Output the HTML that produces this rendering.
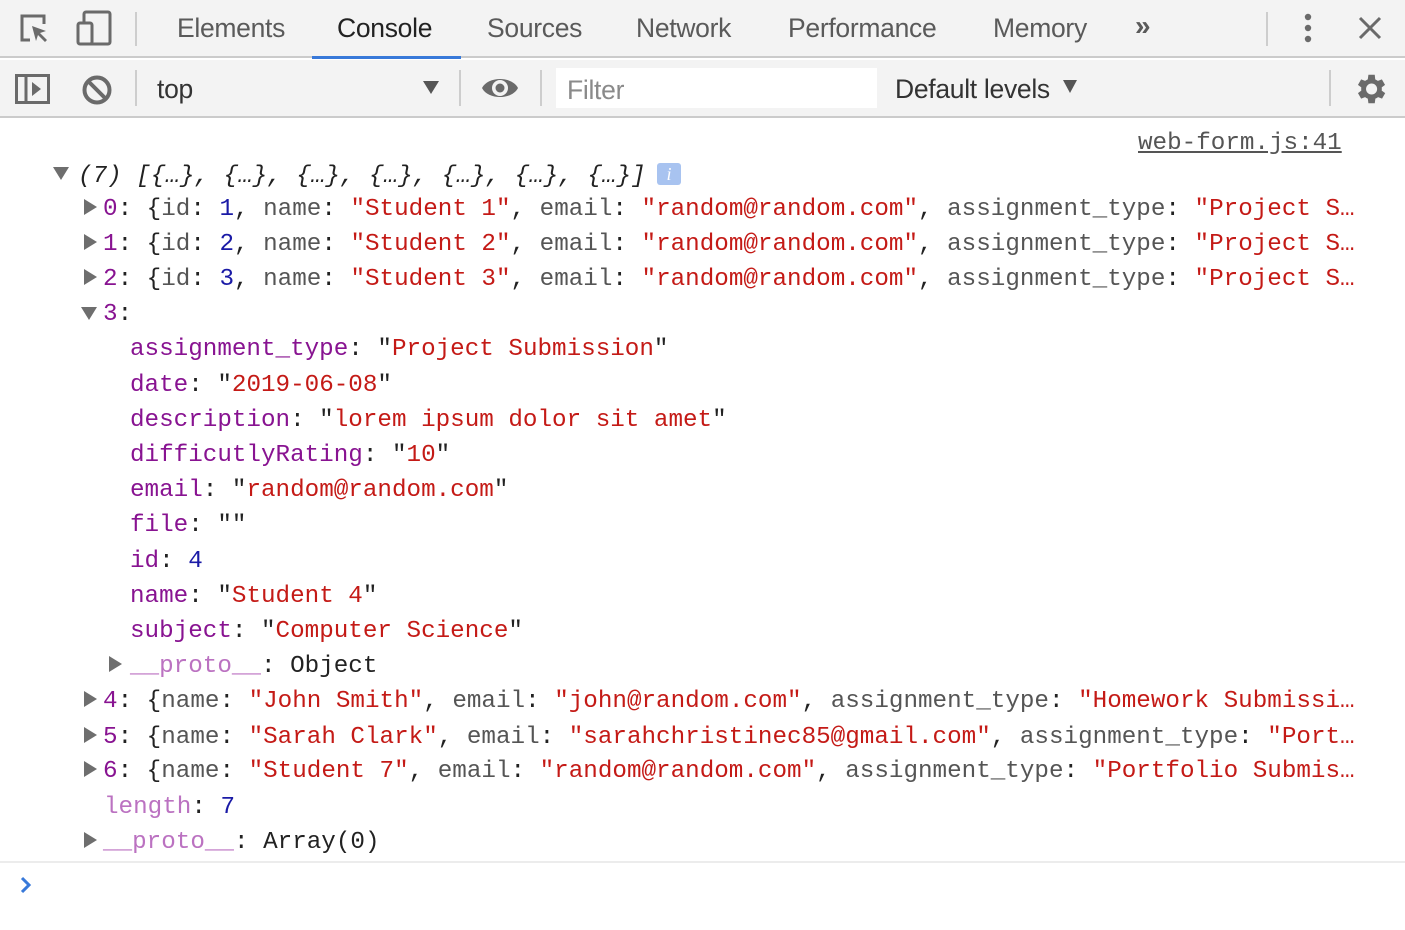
<!DOCTYPE html>
<html><head><meta charset="utf-8">
<style>
*{margin:0;padding:0;box-sizing:border-box}
body{width:1405px;height:930px;background:#fff;position:relative;overflow:hidden;font-family:"Liberation Sans",Helvetica,Arial,sans-serif}
.bar1{position:absolute;left:0;top:0;width:1405px;height:58px;background:#f3f3f3;border-bottom:2px solid #cbcbcb}
.bar2{position:absolute;left:0;top:60px;width:1405px;height:58px;background:#f3f3f3;border-bottom:2px solid #cbcbcb}
.tab{position:absolute;top:13px;font-size:26.5px;color:#5a5a5a;letter-spacing:-0.3px}
.sep{position:absolute;width:2px;background:#cdcdcd}
.mono{font-family:"Liberation Mono","DejaVu Sans Mono",monospace;font-size:24.25px}
.ln{position:absolute;white-space:pre;line-height:35px;color:#222;margin-top:2px}
.k{color:#881391}.kl{color:#bb72c1}.g{color:#555}.s{color:#c41a16}.n{color:#1a1aa6}
.tri{position:absolute;width:0;height:0;margin-top:1px}
.tr{border-top:8px solid transparent;border-bottom:8px solid transparent;border-left:13px solid #6e6e6e}
.td{border-left:8px solid transparent;border-right:8px solid transparent;border-top:13px solid #6e6e6e}
</style></head><body>
<div class="bar1">
  <svg style="position:absolute;left:18px;top:12px" width="36" height="34" viewBox="0 0 36 34"><path d="M12 28H4V4h22v8" fill="none" stroke="#6a6a6a" stroke-width="3"/><path d="M14 14l14 5-6 2 7 7-2 2-7-7-2 6z" fill="#6a6a6a"/></svg>
  <svg style="position:absolute;left:76px;top:10px" width="36" height="36" viewBox="0 0 36 36"><rect x="8" y="2" width="26" height="32" rx="2" fill="none" stroke="#6a6a6a" stroke-width="3"/><rect x="2" y="13" width="14" height="21" rx="2" fill="#f3f3f3" stroke="#6a6a6a" stroke-width="3"/></svg>
  <div class="sep" style="left:135px;top:12px;height:34px"></div>
  <div class="tab" style="left:177px">Elements</div>
  <div class="tab" style="left:337px;color:#222">Console</div>
  <div style="position:absolute;left:312px;top:56px;width:149px;height:3px;background:#3879d9"></div>
  <div class="tab" style="left:487px">Sources</div>
  <div class="tab" style="left:636px">Network</div>
  <div class="tab" style="left:788px">Performance</div>
  <div class="tab" style="left:993px">Memory</div>
  <div class="tab" style="left:1135px;font-size:28px;top:10px;font-weight:bold">»</div>
  <div class="sep" style="left:1266px;top:12px;height:34px"></div>
  <svg style="position:absolute;left:1300px;top:12px" width="16" height="34"><circle cx="8" cy="5" r="3.2" fill="#6a6a6a"/><circle cx="8" cy="16" r="3.2" fill="#6a6a6a"/><circle cx="8" cy="27" r="3.2" fill="#6a6a6a"/></svg>
  <svg style="position:absolute;left:1358px;top:16px" width="24" height="24"><path d="M2 2L22 22M22 2L2 22" stroke="#6a6a6a" stroke-width="3"/></svg>
</div>
<div class="bar2">
  <svg style="position:absolute;left:15px;top:14px" width="36" height="30" viewBox="0 0 36 30"><rect x="1.5" y="1.5" width="32" height="27" fill="none" stroke="#6a6a6a" stroke-width="3"/><path d="M11 1v28" stroke="#6a6a6a" stroke-width="3"/><path d="M17 8v14l9-7z" fill="#6a6a6a"/></svg>
  <svg style="position:absolute;left:81px;top:14px" width="32" height="32" viewBox="0 0 32 32"><circle cx="16" cy="16" r="12.5" fill="none" stroke="#6a6a6a" stroke-width="4"/><path d="M7 7l18 18" stroke="#6a6a6a" stroke-width="4"/></svg>
  <div class="sep" style="left:135px;top:10px;height:36px"></div>
  <div class="tab" style="left:157px;top:14px;color:#333">top</div>
  <div style="position:absolute;left:423px;top:21px;border-left:8px solid transparent;border-right:8px solid transparent;border-top:13px solid #555"></div>
  <div class="sep" style="left:459px;top:10px;height:36px"></div>
  <svg style="position:absolute;left:481px;top:13px" width="38" height="30" viewBox="0 0 38 30"><path d="M1 15C7 3 31 3 37 15C31 27 7 27 1 15z" fill="#6a6a6a"/><circle cx="19" cy="15" r="8" fill="#f3f3f3"/><circle cx="19" cy="15" r="4.5" fill="#6a6a6a"/></svg>
  <div class="sep" style="left:540px;top:10px;height:36px"></div>
  <div style="position:absolute;left:556px;top:8px;width:321px;height:40px;background:#fff"></div>
  <div class="tab" style="left:567px;top:15px;color:#8a8a8a">Filter</div>
  <div class="tab" style="left:895px;top:14px;color:#333">Default levels</div>
  <div style="position:absolute;left:1063px;top:20px;border-left:7px solid transparent;border-right:7px solid transparent;border-top:13px solid #555"></div>
  <div class="sep" style="left:1329px;top:10px;height:36px"></div>
  <svg style="position:absolute;left:1351px;top:10px" width="38" height="38" viewBox="0 0 24 24"><path fill="#6a6a6a" d="M19.4 13a7.5 7.5 0 0 0 0-2l2.1-1.6-2-3.5-2.5 1a7 7 0 0 0-1.7-1L15 3h-4l-.4 2.9a7 7 0 0 0-1.7 1l-2.5-1-2 3.5L6.5 11a7.5 7.5 0 0 0 0 2l-2.1 1.6 2 3.5 2.5-1a7 7 0 0 0 1.7 1L11 21h4l.4-2.9a7 7 0 0 0 1.7-1l2.5 1 2-3.5zM13 15.5a3.5 3.5 0 1 1 0-7 3.5 3.5 0 0 1 0 7z"/></svg>
</div>

<div class="mono ln" style="left:1138px;top:124px;color:#555;text-decoration:underline">web-form.js:41</div>

<div class="tri td" style="left:53px;top:166px"></div>
<div class="mono ln" style="left:78px;top:157px;font-style:italic">(7) [{…}, {…}, {…}, {…}, {…}, {…}, {…}]</div>
<div style="position:absolute;left:657px;top:163px;width:24px;height:22px;background:#a8c3f0;border-radius:3px;color:#fff;font-family:'Liberation Serif',serif;font-style:italic;font-size:18px;text-align:center;line-height:22px">i</div>

<div class="tri tr" style="left:84px;top:198px"></div>
<div class="mono ln" style="left:103px;top:190px"><span class="k">0</span>: {<span class="g">id</span>: <span class="n">1</span>, <span class="g">name</span>: <span class="s">"Student 1"</span>, <span class="g">email</span>: <span class="s">"random@random.com"</span>, <span class="g">assignment_type</span>: <span class="s">"Project S…</span></div>
<div class="tri tr" style="left:84px;top:233px"></div>
<div class="mono ln" style="left:103px;top:225px"><span class="k">1</span>: {<span class="g">id</span>: <span class="n">2</span>, <span class="g">name</span>: <span class="s">"Student 2"</span>, <span class="g">email</span>: <span class="s">"random@random.com"</span>, <span class="g">assignment_type</span>: <span class="s">"Project S…</span></div>
<div class="tri tr" style="left:84px;top:268px"></div>
<div class="mono ln" style="left:103px;top:260px"><span class="k">2</span>: {<span class="g">id</span>: <span class="n">3</span>, <span class="g">name</span>: <span class="s">"Student 3"</span>, <span class="g">email</span>: <span class="s">"random@random.com"</span>, <span class="g">assignment_type</span>: <span class="s">"Project S…</span></div>
<div class="tri td" style="left:81px;top:306px"></div>
<div class="mono ln" style="left:103px;top:295px"><span class="k">3</span>:</div>

<div class="mono ln" style="left:130px;top:330px"><span class="k">assignment_type</span>: "<span class="s">Project Submission</span>"</div>
<div class="mono ln" style="left:130px;top:366px"><span class="k">date</span>: "<span class="s">2019-06-08</span>"</div>
<div class="mono ln" style="left:130px;top:401px"><span class="k">description</span>: "<span class="s">lorem ipsum dolor sit amet</span>"</div>
<div class="mono ln" style="left:130px;top:436px"><span class="k">difficutlyRating</span>: "<span class="s">10</span>"</div>
<div class="mono ln" style="left:130px;top:471px"><span class="k">email</span>: "<span class="s">random@random.com</span>"</div>
<div class="mono ln" style="left:130px;top:506px"><span class="k">file</span>: ""</div>
<div class="mono ln" style="left:130px;top:542px"><span class="k">id</span>: <span class="n">4</span></div>
<div class="mono ln" style="left:130px;top:577px"><span class="k">name</span>: "<span class="s">Student 4</span>"</div>
<div class="mono ln" style="left:130px;top:612px"><span class="k">subject</span>: "<span class="s">Computer Science</span>"</div>
<div class="tri tr" style="left:109px;top:655px"></div>
<div class="mono ln" style="left:130px;top:647px"><span class="kl">__proto__</span>: Object</div>

<div class="tri tr" style="left:84px;top:690px"></div>
<div class="mono ln" style="left:103px;top:682px"><span class="k">4</span>: {<span class="g">name</span>: <span class="s">"John Smith"</span>, <span class="g">email</span>: <span class="s">"john@random.com"</span>, <span class="g">assignment_type</span>: <span class="s">"Homework Submissi…</span></div>
<div class="tri tr" style="left:84px;top:726px"></div>
<div class="mono ln" style="left:103px;top:718px"><span class="k">5</span>: {<span class="g">name</span>: <span class="s">"Sarah Clark"</span>, <span class="g">email</span>: <span class="s">"sarahchristinec85@gmail.com"</span>, <span class="g">assignment_type</span>: <span class="s">"Port…</span></div>
<div class="tri tr" style="left:84px;top:760px"></div>
<div class="mono ln" style="left:103px;top:752px"><span class="k">6</span>: {<span class="g">name</span>: <span class="s">"Student 7"</span>, <span class="g">email</span>: <span class="s">"random@random.com"</span>, <span class="g">assignment_type</span>: <span class="s">"Portfolio Submis…</span></div>
<div class="mono ln" style="left:104px;top:788px"><span class="kl">length</span>: <span class="n">7</span></div>
<div class="tri tr" style="left:84px;top:831px"></div>
<div class="mono ln" style="left:103px;top:823px"><span class="kl">__proto__</span>: Array(0)</div>

<div style="position:absolute;left:0;top:861px;width:1405px;height:2px;background:#ececec"></div>
<svg style="position:absolute;left:19px;top:876px" width="14" height="18" viewBox="0 0 14 18"><path d="M3 2l7 7-7 7" fill="none" stroke="#3879d9" stroke-width="3"/></svg>
</body></html>
